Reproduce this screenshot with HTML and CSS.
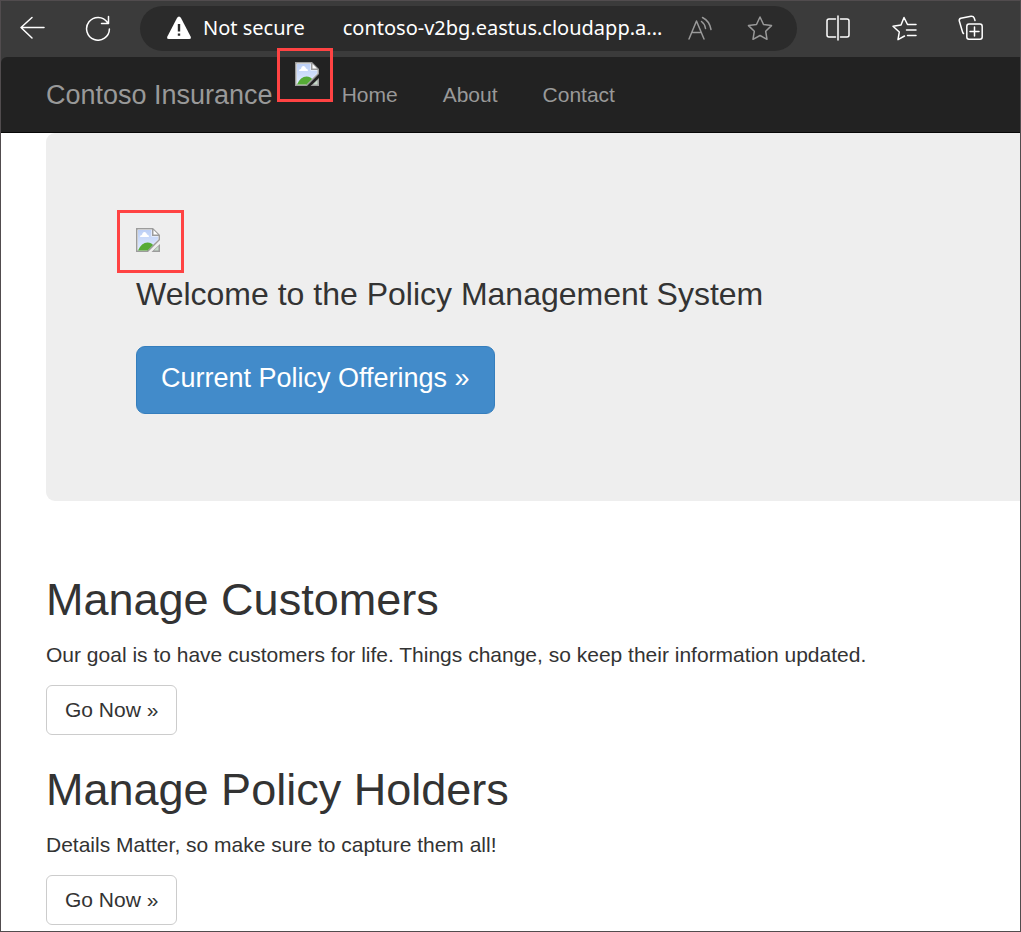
FILE: index.html
```html
<!DOCTYPE html>
<html lang="en">
<head>
<meta charset="utf-8">
<title>Contoso Insurance</title>
<link rel="stylesheet" href="styles.css">
</head>
<body>
<svg class="defs" aria-hidden="true">
  <defs>
    <linearGradient id="sky" x1="0" y1="0" x2="0" y2="1">
      <stop offset="0" stop-color="#bccff5"/>
      <stop offset="1" stop-color="#e0ebff"/>
    </linearGradient>
    <symbol id="missing" viewBox="0 0 24 24">
      <path d="M0 0H17L24 7V12L12 24H0Z" fill="#9c9c9c"/>
      <path d="M1.500 1.500H16V8H22.500V11.500L11 22.500H1.500Z" fill="#fff"/>
      <path d="M2 2H15.500V8.500H22V11.500L11.500 22H2Z" fill="url(#sky)"/>
      <path d="M17.500 2L22 6.500H17.500Z" fill="#fff"/>
      <path d="M4 9Q4 7 6 7Q6.500 4 8.500 4Q10.500 4 11 6.500Q13 6.500 13 9Z" fill="#fff"/>
      <path d="M2 22.500Q5.500 14.500 11.500 14.500Q15.500 14.500 17 17L11.500 22.500Z" fill="#56ab36"/>
      <path d="M24 16V24H15.500Z" fill="#9c9c9c"/>
      <path d="M22.500 18V22.500H18Z" fill="#c5dcc9"/>
    </symbol>
  </defs>
</svg>
<div class="window">
  <header class="toolbar">
    <button class="tool" aria-label="Back"><svg viewBox="0 0 26 26"><path d="M25 12.500H2M13 2.500L2 12.500L13 23"/></svg></button>
    <button class="tool" aria-label="Refresh"><svg viewBox="0 0 26 26"><path d="M22.500 7.500A11.400 11.400 0 1 0 24.400 14M23.500 1.500V8.500H16.500"/></svg></button>
    <div class="address">
      <span class="security"><svg class="warning" viewBox="0 0 26 26"><path d="M13 1.500Q14.200 1.500 15 3L24.600 21.500Q25.600 24 23.300 24H2.700Q.4 24 1.400 21.500L11 3Q11.800 1.500 13 1.500Z" fill="#fff"/><path d="M13 9V16.500M13 18.500V20.700" stroke="#2b2b2b" stroke-width="2.400"/></svg>Not secure</span>
      <span class="url">contoso-v2bg.eastus.cloudapp.a...</span>
      <button class="tool muted" aria-label="Read aloud"><svg viewBox="0 0 26 26"><path d="M2 24L9.500 6L17 24M4.800 17.500H14.200M14.500 6.500Q18 9 18.500 13.500M15.500 2.500Q22.500 6 24 14.500"/></svg></button>
      <button class="tool muted" aria-label="Add to favorites"><svg viewBox="0 0 26 26"><path d="M13 2L16.500 9.500L24.500 10.600L18.700 16.300L20 24.300L13 20.500L6 24.300L7.300 16.300L1.500 10.600L9.500 9.500Z"/></svg></button>
    </div>
    <button class="tool" aria-label="Split screen"><svg viewBox="0 0 26 26"><path d="M13 1V25M10.500 4H4Q2 4 2 6V20Q2 22 4 22H10.500M15.500 4H22Q24 4 24 6V20Q24 22 22 22H15.500"/></svg></button>
    <button class="tool" aria-label="Favorites"><svg viewBox="0 0 26 26"><path d="M13.500 21L7 24.700L8.300 17L2 11.200L10 10L13 2.500L16.500 9.500M16.500 9.500H25M15.500 15H25M16.500 20.500H25"/></svg></button>
    <button class="tool" aria-label="Collections"><svg viewBox="0 0 26 26"><path d="M6.500 18.500Q5.700 18 5.400 16.500L2.300 6Q1.800 4 3.800 3.200L14 1.200Q16.500 1 17.200 3L18 5.500M12 9H23Q25.200 9 25.200 11.500V22Q25.200 24.200 23 24.200H12Q9.800 24.200 9.800 22V11.500Q9.800 9 12 9ZM17.500 12V21M13 16.500H22"/></svg></button>
  </header>
  <div class="navwrap">
    <nav class="navbar">
      <a class="brand" href="#">Contoso Insurance</a>
      <span class="missing logo" role="img" aria-label="Logo"><svg viewBox="0 0 24 24"><use href="#missing"/></svg></span>
      <a class="navlink" href="#">Home</a>
      <a class="navlink" href="#">About</a>
      <a class="navlink" href="#">Contact</a>
    </nav>
  </div>
  <main class="page">
    <section class="hero">
      <span class="missing banner" role="img" aria-label="Banner"><svg viewBox="0 0 24 24"><use href="#missing"/></svg></span>
      <p class="lead">Welcome to the Policy Management System</p>
      <a class="primary" href="#">Current Policy Offerings »</a>
    </section>
    <section class="topic">
      <h2>Manage Customers</h2>
      <p>Our goal is to have customers for life. Things change, so keep their information updated.</p>
      <a class="go" href="#">Go Now »</a>
    </section>
    <section class="topic">
      <h2>Manage Policy Holders</h2>
      <p>Details Matter, so make sure to capture them all!</p>
      <a class="go" href="#">Go Now »</a>
    </section>
  </main>
</div>
</body>
</html>
```
FILE: styles.css
```css
*, *::after { box-sizing: border-box; }
body {
  margin: 0;
  background: #fff;
  color: #333;
  font: 21px/30px "Liberation Sans", Arial, sans-serif;
}
a { text-decoration: none; color: inherit; }
h2, p { margin: 0; font-weight: 400; }
.defs { position: absolute; width: 0; height: 0; }
.window {
  min-height: 100vh;
  border: 1px solid #514c4e;
  background: #fff;
}
.toolbar {
  display: flex;
  align-items: center;
  gap: 40px;
  height: 56px;
  padding: 0 37px 2px 18px;
  background: #3b3b3b;
  color: #fff;
  font: 20px/30px "Noto Sans", "Segoe UI", sans-serif;
}
.tool {
  flex: none;
  width: 26px;
  height: 26px;
  padding: 0;
  border: 0;
  background: none;
  color: #fff;
}
.tool svg {
  display: block;
  width: 26px;
  height: 26px;
  fill: none;
  stroke: currentColor;
  stroke-width: 1.5;
  stroke-linejoin: round;
  stroke-linecap: round;
}
.tool.muted { color: #999; }
.address {
  flex: 1;
  min-width: 0;
  display: flex;
  align-items: center;
  gap: 34px;
  height: 45px;
  margin: 0 -12px 0 -11px;
  padding: 0 24px 0 26px;
  border-radius: 23px;
  background: #2b2b2b;
}
.security { display: flex; align-items: center; gap: 11px; margin-right: 4px; white-space: nowrap; }
.warning { width: 26px; height: 26px; }
.url { flex: 1; min-width: 0; white-space: nowrap; }
.navwrap { background: #3b3b3b; }
.navbar {
  display: flex;
  align-items: center;
  gap: 45px;
  height: 76px;
  padding-left: 45px;
  border-bottom: 1px solid #080808;
  background: #222;
  border-top-left-radius: 6px;
  color: #999;
}
.brand { margin-right: -23px; font-size: 27px; }
.missing { position: relative; display: block; width: 24px; height: 24px; }
.missing svg { display: block; width: 24px; height: 24px; }
.missing::after {
  content: "";
  position: absolute;
  border: 3px solid #ff4343;
}
.logo { align-self: flex-start; margin: 5px -22px 0 0; }
.logo::after { left: -18px; top: -14px; width: 56px; height: 54px; }
.banner::after { left: -19px; top: -18px; width: 67px; height: 63px; }
.page { padding-left: 45px; }
.hero {
  margin-bottom: 69px;
  padding: 95px 90px 87px;
  border-radius: 9px 0 0 9px;
  background: #eee;
}
.lead { margin: 19px 0 28px; font-size: 32px; line-height: 47px; }
.primary {
  display: inline-block;
  padding: 14px 24px 18px;
  border: 1px solid #357ebd;
  border-radius: 9px;
  background: #428bca;
  color: #fff;
  font-size: 27px;
  line-height: 34px;
  vertical-align: top;
}
.topic { margin-bottom: 25px; }
.topic:last-child { margin-bottom: 0; }
.topic h2 { margin-bottom: 10px; font-size: 45px; line-height: 60px; }
.topic p { margin-bottom: 15px; }
.go {
  display: inline-block;
  padding: 9px 18px;
  border: 1px solid #ccc;
  border-radius: 6px;
  vertical-align: top;
}
```
